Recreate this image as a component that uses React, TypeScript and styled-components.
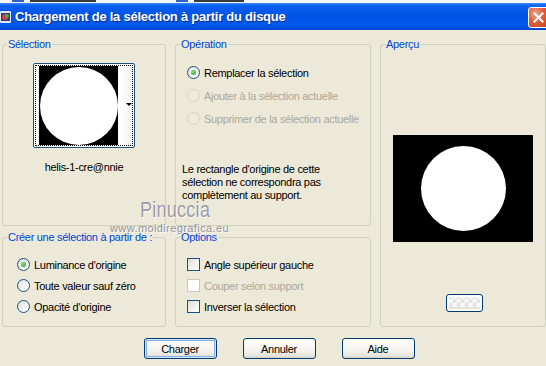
import styled, { createGlobalStyle } from "styled-components";

const GlobalStyle = createGlobalStyle`
  html, body {
    margin: 0;
    padding: 0;
    background: #ece9d8;
  }
  body {
    font-family: "Liberation Sans", Arial, sans-serif;
    font-size: 11px;
    letter-spacing: -0.3px;
    color: #000;
  }
`;

const Window = styled.div`
  position: relative;
  width: 546px;
  height: 366px;
  overflow: hidden;
  background: #ece9d8;
  display: flex;
  flex-direction: column;
`;

const BackStrip = styled.div`
  height: 3px;
  overflow: hidden;
  background: #f4f4f2;
  display: flex;
  align-items: flex-start;
  padding-left: 12px;
`;

const StripBit = styled.i<{ $w: number; $ml?: number; $c?: string }>`
  width: ${(p) => p.$w}px;
  height: 2px;
  margin-left: ${(p) => p.$ml ?? 0}px;
  background: ${(p) => p.$c ?? "#3a3a3a"};
`;

const TitleBar = styled.div`
  height: 27px;
  display: flex;
  align-items: center;
  background: linear-gradient(
    to bottom,
    #3a8cff 0%,
    #0a5ff0 10%,
    #0054e6 45%,
    #0058ee 80%,
    #0048d0 100%
  );
`;

const TitleIcon = styled.svg`
  width: 12px;
  height: 14px;
  flex: none;
`;

const TitleText = styled.div`
  flex: 1;
  margin-left: 3px;
  color: #fff;
  font-family: "Liberation Sans", Arial, sans-serif;
  font-weight: bold;
  font-size: 13px;
  letter-spacing: -0.25px;
  text-shadow: 1px 1px 0 #0a2c8a;
  white-space: nowrap;
`;

const CloseButton = styled.div`
  width: 21px;
  height: 21px;
  margin-right: -3px;
  margin-top: 1px;
  box-sizing: border-box;
  border: 1px solid #fff;
  border-radius: 3px;
  background: radial-gradient(
    circle at 35% 30%,
    #f3a48c 0%,
    #e0603c 45%,
    #c8401f 100%
  );
  display: flex;
  align-items: center;
  justify-content: center;
`;

const Body = styled.div`
  flex: 1;
  display: flex;
  flex-direction: column;
  padding: 8px 0 0 2px;
`;

const Grid = styled.div`
  display: grid;
  grid-template-columns: 164px 196px 166px;
  grid-template-rows: 188px 96px;
  grid-template-areas:
    "sel op prev"
    "create opts prev";
  column-gap: 9px;
  row-gap: 5px;
`;

const Group = styled.fieldset<{ $area: string }>`
  margin: 0;
  padding: 0;
  min-width: 0;
  box-sizing: border-box;
  border: 1px solid #d0d0bf;
  border-radius: 3px;
  grid-area: ${(p) => p.$area};
  display: flex;
  flex-direction: column;
`;

const Legend = styled.legend`
  margin-left: 4px;
  padding: 0 1px;
  color: #0046d5;
  line-height: 13px;
  font-size: 11px;
`;

const SelectionContent = styled.div`
  display: flex;
  flex-direction: column;
  align-items: center;
  padding-top: 12px;
`;

const ThumbFrame = styled.div`
  width: 102px;
  height: 85px;
  box-sizing: border-box;
  border: 1px solid #1c5180;
  border-radius: 2px;
  padding: 1px;
  background: #fff;
`;

const ThumbInner = styled.div`
  position: relative;
  height: 100%;
  box-sizing: border-box;
  border: 1px dotted #000;
  padding-left: 3px;
  display: flex;
  background: linear-gradient(to right, #fff 0, #fff 88%, #f2f2f2 100%);
`;

const Picture = styled.div<{ $w: number; $h: number; $d: number }>`
  width: ${(p) => p.$w}px;
  height: ${(p) => p.$h}px;
  background: #000;
  display: flex;
  align-items: center;
  justify-content: center;
  &::after {
    content: "";
    width: ${(p) => p.$d}px;
    height: ${(p) => p.$d}px;
    border-radius: 50%;
    background: #fff;
  }
`;

const DropArrow = styled.span`
  position: absolute;
  right: 0;
  top: 37px;
  width: 0;
  height: 0;
  border-left: 3px solid transparent;
  border-right: 3px solid transparent;
  border-top: 3px solid #000;
`;

const FileName = styled.div`
  margin-top: 13px;
  line-height: 13px;
`;

const OperationContent = styled.div`
  padding: 14px 0 0 11px;
  display: flex;
  flex-direction: column;
`;

const OptionList = styled.div<{ $gap: number }>`
  display: flex;
  flex-direction: column;
  gap: ${(p) => p.$gap}px;
`;

const OptionRow = styled.label<{ $disabled?: boolean }>`
  display: flex;
  align-items: center;
  gap: 4px;
  height: 15px;
  color: ${(p) => (p.$disabled ? "#aca899" : "#000")};
  white-space: nowrap;
`;

const Radio = styled.span<{ $checked?: boolean; $disabled?: boolean }>`
  width: 13px;
  height: 13px;
  box-sizing: border-box;
  border-radius: 50%;
  border: 1px solid ${(p) => (p.$disabled ? "#d6d3c4" : "#1c5180")};
  background: ${(p) =>
    p.$disabled
      ? "#eeebdd"
      : "linear-gradient(135deg, #dcdcd7 0%, #f4f4f0 55%, #fff 100%)"};
  display: flex;
  align-items: center;
  justify-content: center;
  flex: none;
  &::after {
    content: "";
    display: ${(p) => (p.$checked ? "block" : "none")};
    width: 5px;
    height: 5px;
    border-radius: 50%;
    background: radial-gradient(circle at 35% 35%, #7be07b, #21a121);
  }
`;

const Check = styled.span<{ $disabled?: boolean }>`
  width: 13px;
  height: 13px;
  box-sizing: border-box;
  border: 1px solid ${(p) => (p.$disabled ? "#cac8bb" : "#1c5180")};
  background: ${(p) =>
    p.$disabled
      ? "#fff"
      : "linear-gradient(135deg, #dcdcd7 0%, #f2f2ee 55%, #fff 100%)"};
  flex: none;
`;

const Note = styled.p`
  margin: 37px 0 0 -5px;
  line-height: 13px;
`;

const PreviewContent = styled.div`
  display: flex;
  flex-direction: column;
  align-items: center;
  padding-top: 84px;
  gap: 52px;
`;

const SmallButton = styled.div`
  width: 37px;
  height: 18px;
  box-sizing: border-box;
  border: 1px solid #003c74;
  border-radius: 3px;
  margin-left: 3px;
  background:
    repeating-conic-gradient(#f7f7f7 0 25%, #e6e6e6 0 50%) 50% 50% / 8px 8px;
  box-shadow: inset 0 0 0 2px #fcfcfb, inset 0 -2px 0 2px #e4e1d6;
`;

const CreateContent = styled.div`
  padding: 13px 0 0 14px;
`;

const OptionsContent = styled.div`
  padding: 13px 0 0 11px;
`;

const ButtonRow = styled.div`
  display: flex;
  justify-content: center;
  gap: 26px;
  margin-top: 11px;
  padding-left: 10px;
`;

const Button = styled.div<{ $default?: boolean }>`
  width: 73px;
  height: 21px;
  box-sizing: border-box;
  border: 1px solid #003c74;
  border-radius: 3px;
  display: flex;
  align-items: center;
  justify-content: center;
  background: linear-gradient(to bottom, #fff 0%, #f4f3ee 60%, #e6e3da 90%, #d6d0c5 100%);
  box-shadow: ${(p) =>
    p.$default
      ? "inset 0 0 0 1px #cee7ff, inset 0 0 0 2px #89ade4"
      : "none"};
`;

const Watermark = styled.div`
  position: absolute;
  left: 140px;
  top: 199px;
  font-family: "Liberation Sans", Arial, sans-serif;
  font-size: 22px;
  line-height: 22px;
  letter-spacing: 0.3px;
  color: rgba(125, 125, 150, 0.75);
  text-shadow: 1px 1px 0 rgba(255, 255, 255, 0.8);
  transform: scaleX(0.82);
  transform-origin: left top;
  pointer-events: none;
`;

const WatermarkUrl = styled.div`
  position: absolute;
  left: 110px;
  top: 222px;
  font-size: 11px;
  line-height: 12px;
  letter-spacing: 0.4px;
  color: rgba(120, 120, 140, 0.8);
  text-shadow: 1px 1px 0 rgba(255, 255, 255, 0.8);
  pointer-events: none;
`;

export default function App() {
  return (
    <Window>
      <GlobalStyle />
      <BackStrip>
        <StripBit $w={12} $c="#2a64c8" />
        <StripBit $w={66} $ml={6} />
        <StripBit $w={12} $ml={80} $c="#2a64c8" />
        <StripBit $w={50} $ml={6} />
      </BackStrip>
      <TitleBar>
        <TitleIcon viewBox="0 0 12 14">
          <rect x="0" y="1" width="11" height="12" rx="1" fill="#dfe6f2" />
          <rect x="1" y="3" width="9" height="8" fill="#2b3a8c" />
          <circle cx="5" cy="7" r="3" fill="#d23c3c" />
          <circle cx="7" cy="6" r="2" fill="#38b548" />
        </TitleIcon>
        <TitleText>Chargement de la sélection à partir du disque</TitleText>
        <CloseButton>
          <svg width="11" height="11" viewBox="0 0 11 11">
            <path d="M1.5 1.5 L9.5 9.5 M9.5 1.5 L1.5 9.5" stroke="#fff" strokeWidth="2" strokeLinecap="square" />
          </svg>
        </CloseButton>
      </TitleBar>
      <Body>
        <Grid>
          <Group $area="sel">
            <Legend>Sélection</Legend>
            <SelectionContent>
              <ThumbFrame>
                <ThumbInner>
                  <Picture $w={79} $h={79} $d={78} />
                  <DropArrow />
                </ThumbInner>
              </ThumbFrame>
              <FileName>helis-1-cre@nnie</FileName>
            </SelectionContent>
          </Group>
          <Group $area="op">
            <Legend>Opération</Legend>
            <OperationContent>
              <OptionList $gap={8}>
                <OptionRow>
                  <Radio $checked />
                  Remplacer la sélection
                </OptionRow>
                <OptionRow $disabled>
                  <Radio $disabled />
                  Ajouter à la sélection actuelle
                </OptionRow>
                <OptionRow $disabled>
                  <Radio $disabled />
                  Supprimer de la sélection actuelle
                </OptionRow>
              </OptionList>
              <Note>
                Le rectangle d'origine de cette
                <br />
                sélection ne correspondra pas
                <br />
                complètement au support.
              </Note>
            </OperationContent>
          </Group>
          <Group $area="prev">
            <Legend>Aperçu</Legend>
            <PreviewContent>
              <Picture $w={140} $h={107} $d={85} />
              <SmallButton />
            </PreviewContent>
          </Group>
          <Group $area="create">
            <Legend>Créer une sélection à partir de :</Legend>
            <CreateContent>
              <OptionList $gap={6}>
                <OptionRow>
                  <Radio $checked />
                  Luminance d'origine
                </OptionRow>
                <OptionRow>
                  <Radio />
                  Toute valeur sauf zéro
                </OptionRow>
                <OptionRow>
                  <Radio />
                  Opacité d'origine
                </OptionRow>
              </OptionList>
            </CreateContent>
          </Group>
          <Group $area="opts">
            <Legend>Options</Legend>
            <OptionsContent>
              <OptionList $gap={6}>
                <OptionRow>
                  <Check />
                  Angle supérieur gauche
                </OptionRow>
                <OptionRow $disabled>
                  <Check $disabled />
                  Couper selon support
                </OptionRow>
                <OptionRow>
                  <Check />
                  Inverser la sélection
                </OptionRow>
              </OptionList>
            </OptionsContent>
          </Group>
        </Grid>
        <ButtonRow>
          <Button $default>Charger</Button>
          <Button>Annuler</Button>
          <Button>Aide</Button>
        </ButtonRow>
      </Body>
      <Watermark>Pinuccia</Watermark>
      <WatermarkUrl>www.moidiregrafica.eu</WatermarkUrl>
    </Window>
  );
}
